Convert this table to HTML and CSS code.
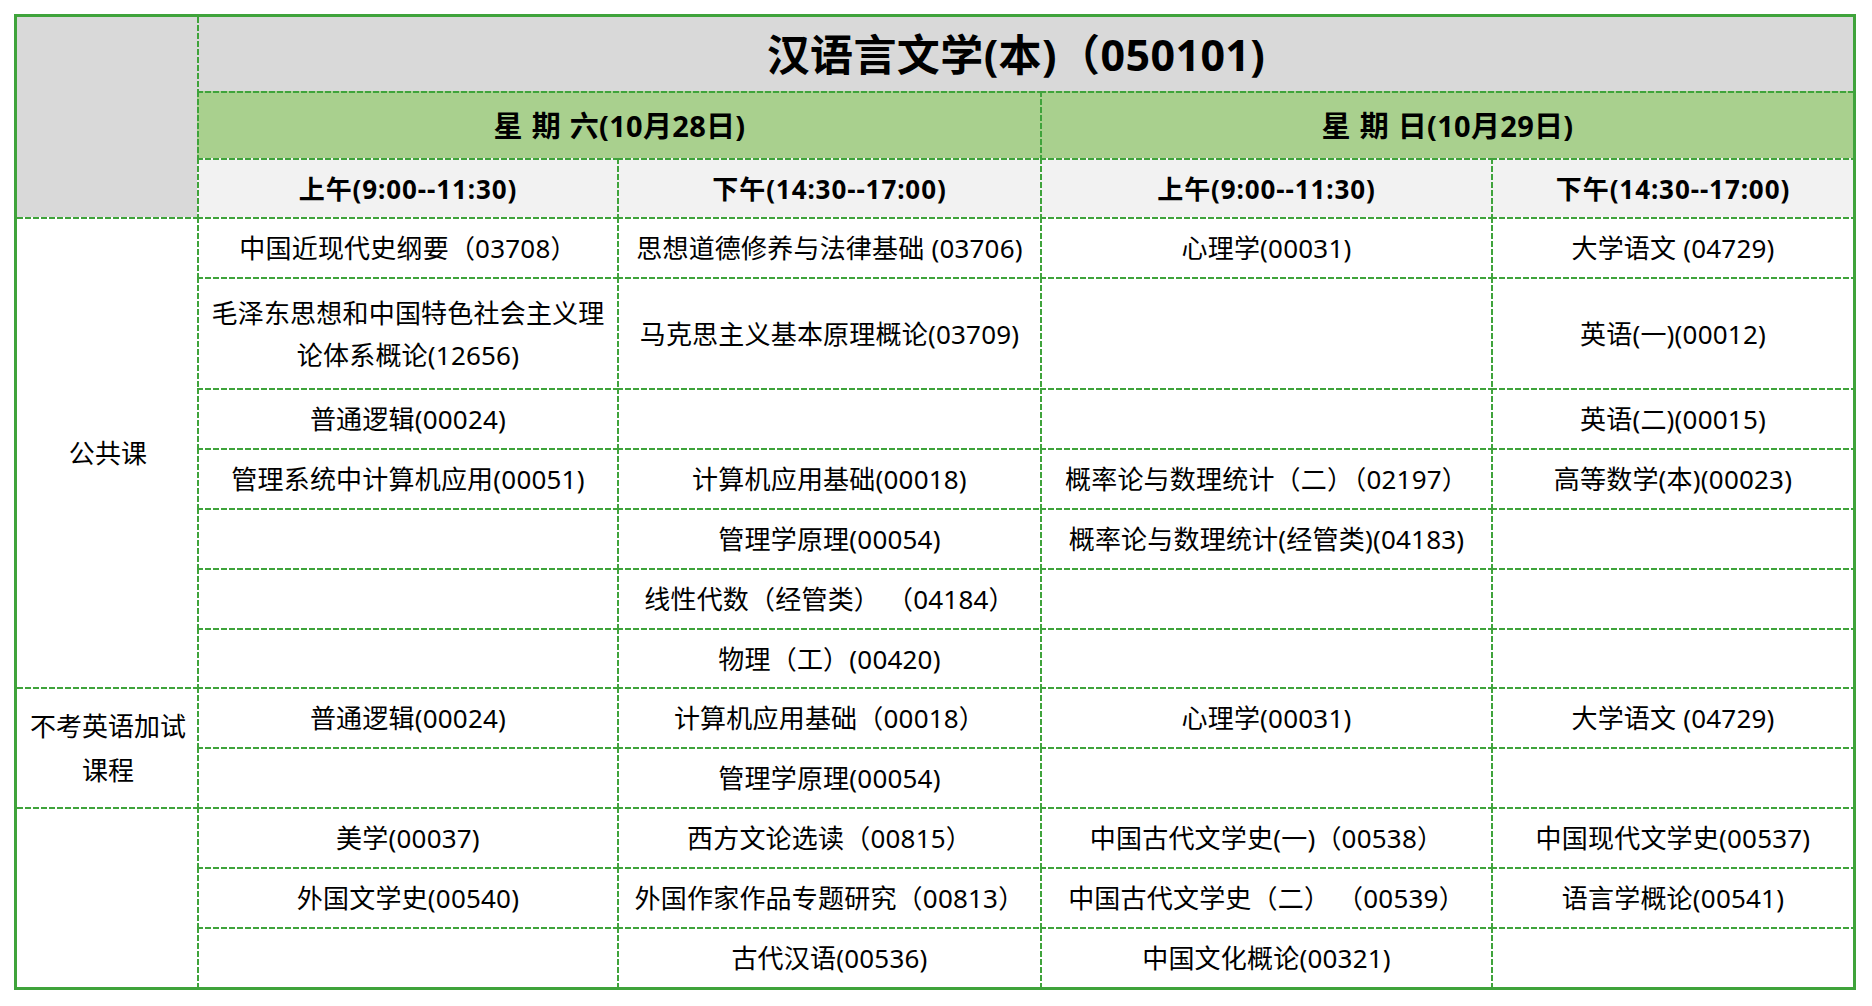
FILE: index.html
```html
<!DOCTYPE html>
<html lang="zh-CN">
<head>
<meta charset="utf-8">
<title>汉语言文学(本)（050101)</title>
<link rel="stylesheet" href="styles.css">
</head>
<body>
<div class="sheet">
  <div class="cell corner first-row first-col"></div>
  <div class="cell title first-row span4">汉语言文学(本)（050101)</div>

  <div class="cell day span2">星 期 六(10月28日)</div>
  <div class="cell day span2">星 期 日(10月29日)</div>

  <div class="cell head">上午(9:00--11:30)</div>
  <div class="cell head">下午(14:30--17:00)</div>
  <div class="cell head">上午(9:00--11:30)</div>
  <div class="cell head">下午(14:30--17:00)</div>

  <div class="cell cat first-col rows7">公共课</div>
  <div class="cell">中国近现代史纲要（03708）</div>
  <div class="cell">思想道德修养与法律基础 (03706)</div>
  <div class="cell">心理学(00031)</div>
  <div class="cell">大学语文 (04729)</div>

  <div class="cell wrap">毛泽东思想和中国特色社会主义理论体系概论(12656)</div>
  <div class="cell">马克思主义基本原理概论(03709)</div>
  <div class="cell"></div>
  <div class="cell">英语(一)(00012)</div>

  <div class="cell">普通逻辑(00024)</div>
  <div class="cell"></div>
  <div class="cell"></div>
  <div class="cell">英语(二)(00015)</div>

  <div class="cell">管理系统中计算机应用(00051)</div>
  <div class="cell">计算机应用基础(00018)</div>
  <div class="cell">概率论与数理统计（二）（02197）</div>
  <div class="cell">高等数学(本)(00023)</div>

  <div class="cell"></div>
  <div class="cell">管理学原理(00054)</div>
  <div class="cell">概率论与数理统计(经管类)(04183)</div>
  <div class="cell"></div>

  <div class="cell"></div>
  <div class="cell">线性代数（经管类） （04184）</div>
  <div class="cell"></div>
  <div class="cell"></div>

  <div class="cell"></div>
  <div class="cell">物理（工）(00420)</div>
  <div class="cell"></div>
  <div class="cell"></div>

  <div class="cell cat first-col rows2 wrap">不考英语加试课程</div>
  <div class="cell">普通逻辑(00024)</div>
  <div class="cell">计算机应用基础（00018）</div>
  <div class="cell">心理学(00031)</div>
  <div class="cell">大学语文 (04729)</div>

  <div class="cell"></div>
  <div class="cell">管理学原理(00054)</div>
  <div class="cell"></div>
  <div class="cell"></div>

  <div class="cell cat first-col rows3"></div>
  <div class="cell">美学(00037)</div>
  <div class="cell">西方文论选读（00815）</div>
  <div class="cell">中国古代文学史(一)（00538）</div>
  <div class="cell">中国现代文学史(00537)</div>

  <div class="cell">外国文学史(00540)</div>
  <div class="cell">外国作家作品专题研究（00813）</div>
  <div class="cell">中国古代文学史（二） （00539）</div>
  <div class="cell">语言学概论(00541)</div>

  <div class="cell"></div>
  <div class="cell">古代汉语(00536)</div>
  <div class="cell">中国文化概论(00321)</div>
  <div class="cell"></div>
</div>
</body>
</html>
```

FILE: styles.css
```css
:root {
  --g: #3fa33b;
  --dash-h: repeating-linear-gradient(90deg, var(--g) 0 6px, transparent 6px 8px);
  --dash-v: repeating-linear-gradient(180deg, var(--g) 0 6px, transparent 6px 8px);
}

html, body {
  margin: 0;
  padding: 0;
  background: #fff;
}

body {
  font-family: "Noto Sans", "Noto Sans CJK SC", sans-serif;
  color: #000;
}

.sheet {
  display: grid;
  grid-template-columns: 180px 420px 423px 451px 362px;
  grid-template-rows: 74px 67px 59px 60px 111px repeat(10, 59.9px);
  border: 3px solid var(--g);
  width: max-content;
  margin: 14px 0 0 14px;
}

.cell {
  --top: var(--dash-h);
  --left: var(--dash-v);
  --bg: #fff;
  display: flex;
  align-items: center;
  justify-content: center;
  text-align: center;
  padding: 2px 6px 0 8px;
  font-size: 26px;
  line-height: 42px;
  letter-spacing: 0.2px;
  white-space: nowrap;
  background:
    var(--top) 0 0 / 100% 2px no-repeat,
    var(--left) 0 0 / 2px 100% no-repeat,
    var(--bg);
}

.first-row { --top: none; }
.first-col { --left: none; }

.span4 { grid-column: span 4; }
.span2 { grid-column: span 2; }
.rows7 { grid-row: span 7; }
.rows2 { grid-row: span 2; }
.rows3 { grid-row: span 3; }

.corner {
  grid-row: span 3;
  --bg: #d9d9d9;
}

.title {
  --bg: #d9d9d9;
  font-size: 43px;
  font-weight: 700;
  line-height: 56px;
  letter-spacing: 0.4px;
  padding-right: 26px;
}

.day {
  --bg: #a9d08e;
  font-size: 29px;
  font-weight: 700;
  word-spacing: 1px;
  letter-spacing: 0.3px;
}

.head {
  --bg: #f2f2f2;
  font-weight: 700;
  letter-spacing: 0.9px;
}

.wrap {
  white-space: normal;
}

.cat.wrap {
  line-height: 44px;
  padding-left: 6px;
  padding-right: 4px;
  letter-spacing: 0;
}
```
